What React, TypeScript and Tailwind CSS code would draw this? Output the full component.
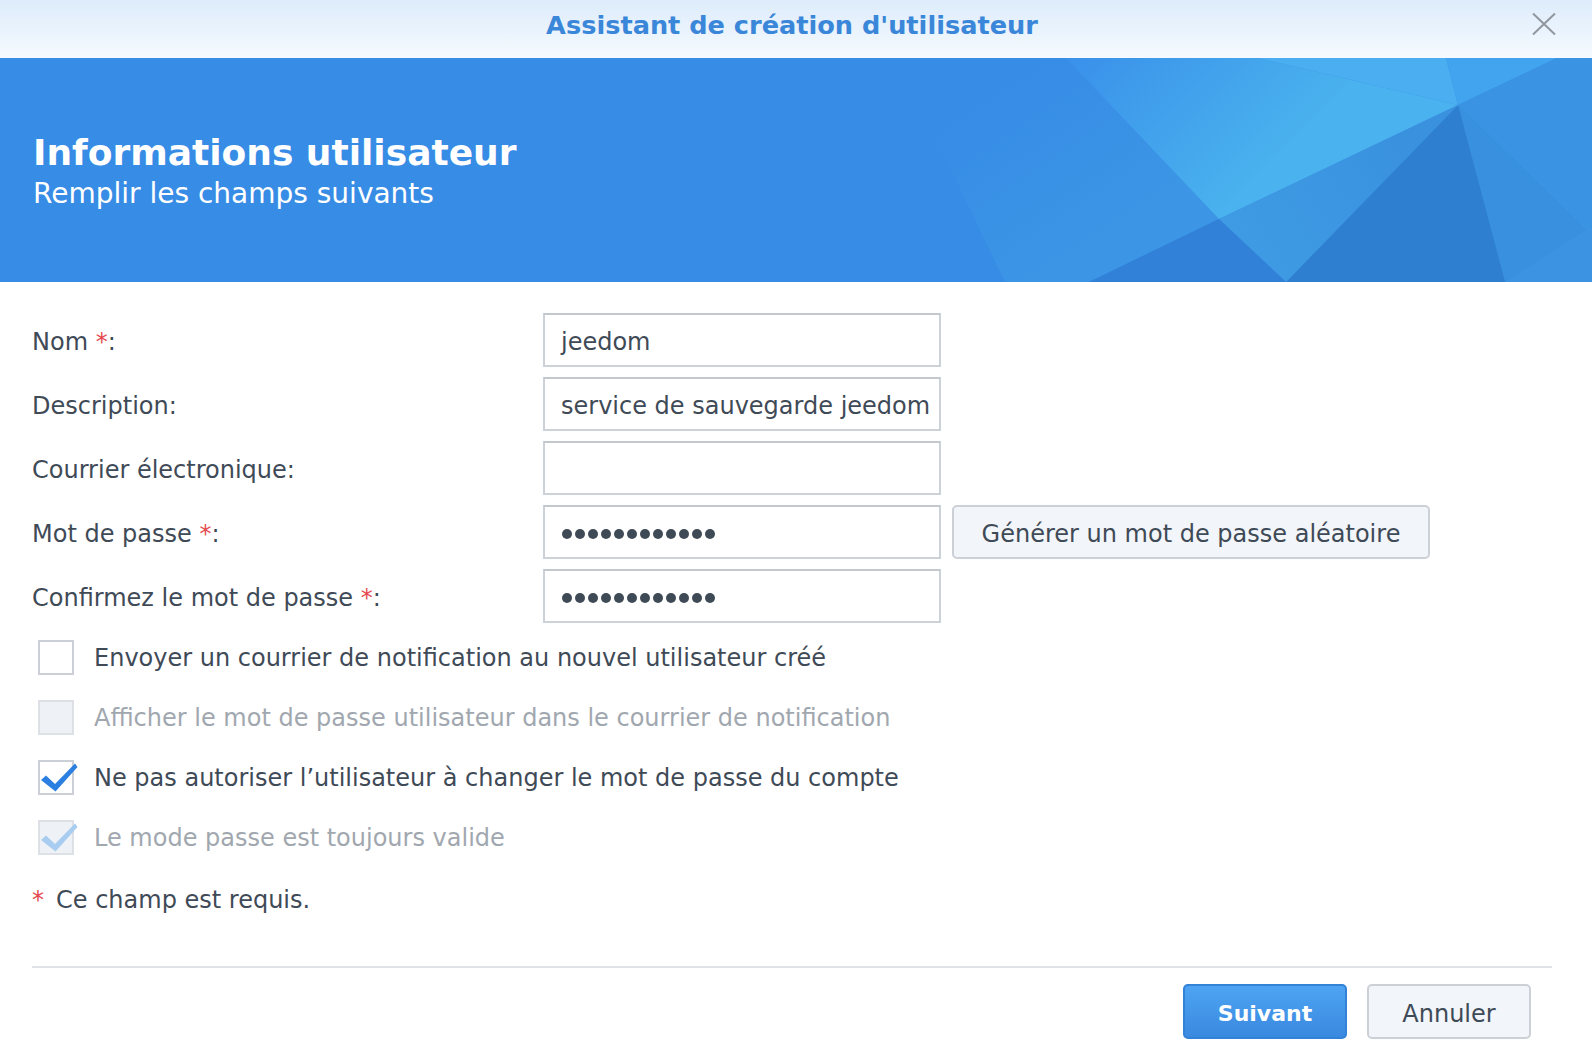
import React from "react";

const campos = [
  { label: "Nom", requis: true, valeur: "jeedom", type: "text" },
  { label: "Description", requis: false, valeur: "service de sauvegarde jeedom", type: "text" },
  { label: "Courrier électronique", requis: false, valeur: "", type: "text" },
  { label: "Mot de passe", requis: true, valeur: "xxxxxxxxxxxx", type: "password", bouton: true },
  { label: "Confirmez le mot de passe", requis: true, valeur: "xxxxxxxxxxxx", type: "password" },
];

const options = [
  { texte: "Envoyer un courrier de notification au nouvel utilisateur créé", coche: false, inactif: false },
  { texte: "Afficher le mot de passe utilisateur dans le courrier de notification", coche: false, inactif: true },
  { texte: "Ne pas autoriser l’utilisateur à changer le mot de passe du compte", coche: true, inactif: false },
  { texte: "Le mode passe est toujours valide", coche: true, inactif: true },
];

function FondBanniere() {
  return (
    <svg
      className="absolute inset-0 w-full h-full"
      viewBox="0 0 1592 224"
      preserveAspectRatio="none"
    >
      <defs>
        <linearGradient id="haut" x1="1080" y1="0" x2="1230" y2="150" gradientUnits="userSpaceOnUse">
          <stop offset="0" stopColor="#3a92ea" />
          <stop offset="1" stopColor="#4ab2ee" />
        </linearGradient>
        <linearGradient id="milieu" x1="1220" y1="160" x2="1380" y2="60" gradientUnits="userSpaceOnUse">
          <stop offset="0" stopColor="#3f9be4" />
          <stop offset="1" stopColor="#3a92de" />
        </linearGradient>
        <linearGradient id="gauche" x1="950" y1="60" x2="1060" y2="224" gradientUnits="userSpaceOnUse">
          <stop offset="0" stopColor="#378ce6" />
          <stop offset="1" stopColor="#3c96e5" />
        </linearGradient>
      </defs>
      <rect x="0" y="0" width="1592" height="224" fill="#378ce6" />
      {/* facettes */}
      <polygon points="897,0 1066,0 1219,161 1089,224 1005,224" fill="url(#gauche)" />
      <polygon points="1066,0 1258,0 1458,47 1219,161" fill="url(#haut)" />
      <polygon points="1258,0 1446,0 1458,47" fill="#4baef0" />
      <polygon points="1446,0 1557,0 1458,47" fill="#42a4ef" />
      <polygon points="1557,0 1592,0 1592,178 1458,47" fill="#3a93e3" />
      <polygon points="1458,47 1592,178 1592,224 1505,224" fill="#3890de" />
      <polygon points="1505,224 1592,168 1592,224" fill="#3b93e2" />
      <polygon points="1458,47 1505,224 1286,224" fill="#2f7fd0" />
      <polygon points="1219,161 1458,47 1286,224" fill="url(#milieu)" />
      <polygon points="1219,161 1286,224 1089,224" fill="#3081d7" />
    </svg>
  );
}

function CaseACocher({ coche, inactif }: { coche: boolean; inactif: boolean }) {
  return (
    <div
      className={`relative w-[36px] h-[35px] shrink-0 border-2 ${
        inactif ? "bg-[#eef1f5] border-[#dde1e6]" : "bg-white border-[#cbd0d6]"
      }`}
    >
      {coche && (
        <svg className="absolute left-[-2px] top-[-2px] overflow-visible" width="40" height="35" viewBox="0 0 40 35">
          <path
            d="M3 20 L8 15.5 L17 24 L37 3.5 L39.5 7 L17.5 31.5 Z"
            fill={inactif ? "#a8cdf1" : "#2b7fe1"}
            strokeLinejoin="round"
          />
        </svg>
      )}
    </div>
  );
}

export default function App() {
  return (
    <div className="w-[1592px] h-[1052px] bg-white flex flex-col font-['DejaVu_Sans',sans-serif] text-[#3f4a57] overflow-hidden">
      {/* Barre de titre */}
      <div className="relative h-[58px] shrink-0 flex justify-center pt-[10px] pr-[8px] bg-gradient-to-b from-[#ddecfb] to-[#f6fafe]">
        <h1 className="text-[25.6px] leading-[30px] font-bold text-[#3a87d9]">
          Assistant de création d'utilisateur
        </h1>
        <button className="absolute right-[36px] top-[13px] w-[24px] h-[22px]">
          <svg width="24" height="22" viewBox="0 0 24 22">
            <path d="M1 0.5 L23 21.5 M23 0.5 L1 21.5" stroke="#90969d" strokeWidth="2" />
          </svg>
        </button>
      </div>

      {/* Bannière */}
      <div className="relative h-[224px] shrink-0 bg-[#378ce6] overflow-hidden">
        <FondBanniere />
        <div className="relative pl-[33px] pt-[74px] text-white">
          <h2 className="text-[36px] leading-[42px] font-bold">Informations utilisateur</h2>
          <p className="text-[28px] leading-[34px] mt-[3px]">Remplir les champs suivants</p>
        </div>
      </div>

      {/* Formulaire */}
      <div className="flex flex-col pl-[32px] pt-[31px] text-[24px]">
        <div className="flex flex-col gap-[10px]">
          {campos.map((c) => (
            <div key={c.label} className="flex items-center h-[54px]">
              <div className="w-[511px] shrink-0 leading-[30px] pt-[4px]">
                {c.label}
                {c.requis && <span className="text-[#e5484d]"> *</span>}:
              </div>
              <div className="w-[398px] h-[54px] shrink-0 flex items-center pl-[16px] pt-[4px] border-2 border-[#cdd2d8] border-t-[#c3c8cf] bg-white whitespace-nowrap overflow-hidden">
                {c.type === "password" ? (
                  <div className="flex gap-[3px] pl-[1px]">
                    {Array.from({ length: 12 }).map((_, i) => (
                      <span key={i} className="w-[10px] h-[10px] rounded-full bg-[#3f4a57]" />
                    ))}
                  </div>
                ) : (
                  c.valeur
                )}
              </div>
              {c.bouton && (
                <button className="ml-[11px] w-[478px] h-[54px] pt-[4px] rounded-[5px] border-2 border-[#ccd1d8] bg-[#f2f5f9] text-[24px] text-[#3f4a57]">
                  Générer un mot de passe aléatoire
                </button>
              )}
            </div>
          ))}
        </div>

        <div className="flex flex-col gap-[25px] mt-[17px] pl-[6px]">
          {options.map((o) => (
            <div key={o.texte} className="flex items-center h-[35px] gap-[20px]">
              <CaseACocher coche={o.coche} inactif={o.inactif} />
              <span className={`leading-[30px] ${o.inactif ? "text-[#a1a7af]" : "text-[#3f4a57]"}`}>
                {o.texte}
              </span>
            </div>
          ))}
        </div>

        <p className="mt-[30px] leading-[30px]">
          <span className="text-[#e5484d] mr-[12px]">*</span>Ce champ est requis.
        </p>
      </div>

      {/* Pied */}
      <div className="mt-[51px] mx-[32px] mr-[40px] h-[2px] bg-[#dfe2e6]" />
      <div className="flex justify-end gap-[20px] mt-[16px] pr-[61px]">
        <button className="w-[164px] h-[55px] pt-[4px] rounded-[5px] border-2 border-[#3282d8] bg-gradient-to-b from-[#4ea4f2] to-[#3a89e0] text-white text-[22px] font-bold">
          Suivant
        </button>
        <button className="w-[164px] h-[55px] pt-[4px] rounded-[5px] border-2 border-[#ccd1d8] bg-[#f2f5f9] text-[24px] text-[#3f4a57]">
          Annuler
        </button>
      </div>
    </div>
  );
}
